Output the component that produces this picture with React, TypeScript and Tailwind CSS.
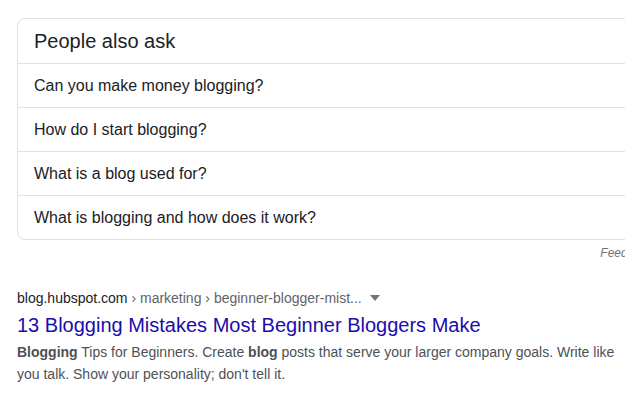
const questions = [
  "Can you make money blogging?",
  "How do I start blogging?",
  "What is a blog used for?",
  "What is blogging and how does it work?",
];

export default function App() {
  return (
    <div className="w-[625px] h-[416px] overflow-hidden bg-white font-['Liberation_Sans',Arial,sans-serif]">
      <div className="w-[636px] ml-[17px] pt-[18px]">
        <div className="border border-[#dfe1e5] rounded-[8px]">
          <div className="h-[44px] flex items-center pl-[16px] text-[20px] text-[#202124]">
            People also ask
          </div>
          {questions.map((q) => (
            <div
              key={q}
              className="h-[44px] border-t border-[#dfe1e5] flex items-center pl-[16px] text-[16px] text-[#202124]"
            >
              {q}
            </div>
          ))}
        </div>
        <div className="h-[26px] flex items-center justify-end text-[12px] italic text-[#70757a]">
          Feedback
        </div>
      </div>

      <div className="ml-[17px] mt-[22px] w-[600px]">
        <div className="h-[20px] flex items-center text-[14px] text-[#202124]">
          blog.hubspot.com
          <span className="text-[#5f6368]">&nbsp;› marketing › beginner-blogger-mist...</span>
          <svg width="10" height="6" viewBox="0 0 10 6" className="ml-[8px]">
            <path d="M0 0h10L5 6z" fill="#70757a" />
          </svg>
        </div>
        <div className="mt-[4px] h-[26px] flex items-center text-[20px] text-[#1a0dab]">
          13 Blogging Mistakes Most Beginner Bloggers Make
        </div>
        <p className="mt-[3px] text-[14px] leading-[22px] text-[#4d5156]">
          <b>Blogging</b> Tips for Beginners. Create <b>blog</b> posts that serve your larger company goals. Write like
          you talk. Show your personality; don't tell it.
        </p>
      </div>
    </div>
  );
}
